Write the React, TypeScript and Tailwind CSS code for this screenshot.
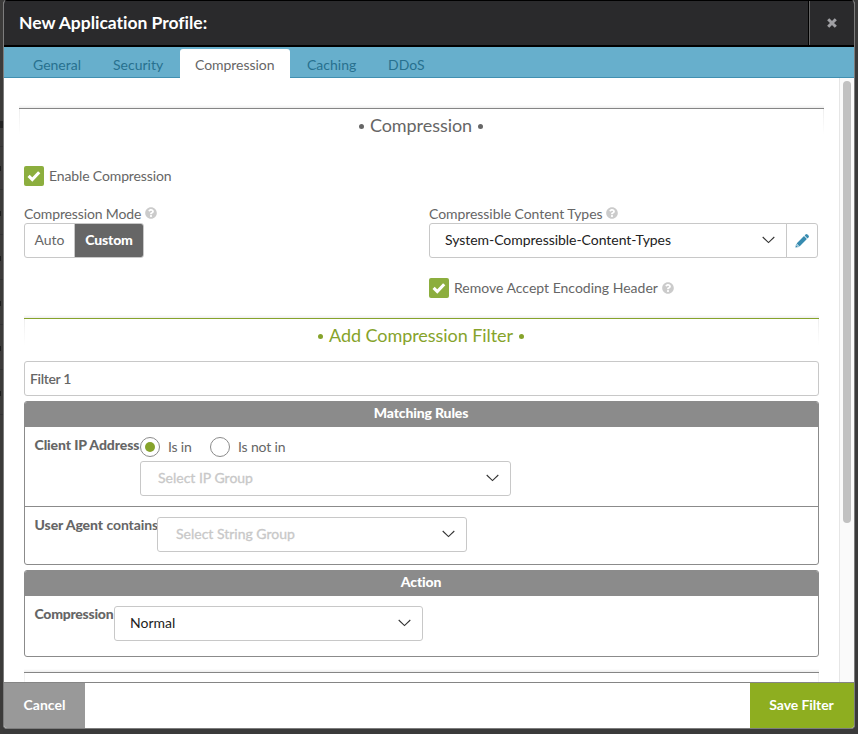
import type { ReactNode } from "react";
import { FaQuestionCircle } from "react-icons/fa";

function Chevron() {
  return (
    <svg width="13" height="8" viewBox="0 0 13 8" fill="none" stroke="#333" strokeWidth="1.1" className="-mt-px shrink-0">
      <path d="M0.7 1l5.8 5.6L12.3 1" />
    </svg>
  );
}

function Pencil() {
  return (
    <svg width="14" height="14" viewBox="0 0 14 14" fill="#378bb0">
      <path d="M9.6 1.5l1-1a1.3 1.3 0 0 1 1.8 0l1.1 1.1a1.3 1.3 0 0 1 0 1.8l-1 1z" />
      <path d="M9 2.1l2.9 2.9-7.4 7.4-2.9-2.9z" />
      <path d="M1.1 10L4 12.9.4 13.6z" />
      <path d="M1.5 11.4l1.2 1.2" stroke="#fff" strokeWidth="0.9" />
    </svg>
  );
}

function Check() {
  return (
    <span className="flex h-5 w-5 shrink-0 items-center justify-center rounded-[2px] bg-[#8cae3e]">
      <svg width="14" height="12" viewBox="0 0 14 12" fill="none" stroke="#fff" strokeWidth="3.1">
        <path d="M1.6 5.8l3.7 3.7L12.2 2.3" />
      </svg>
    </span>
  );
}

function Help() {
  return <FaQuestionCircle size={12} className="shrink-0 text-[#cbcbcb]" />;
}

function Select({ text, className, muted }: { text: string; className: string; muted?: boolean }) {
  return (
    <div className={`flex h-[35px] shrink-0 items-center justify-between rounded-[3px] border border-[#c8c8c8] bg-white pr-[11px] ${className}`}>
      <span className={muted ? "pb-[2px] text-[#c8c8c8] [-webkit-text-stroke:0.3px_#c8c8c8]" : "pb-[2px] text-[#222]"}>{text}</span>
      <Chevron />
    </div>
  );
}

function Dot() {
  return <span className="mt-[3px] h-[5px] w-[5px] rounded-full bg-current" />;
}

function SectionTop({ green, title, titleClass }: { green?: boolean; title?: string; titleClass?: string }) {
  return (
    <div className="h-[30px] shrink-0">
      <div className="h-[3px] bg-linear-to-b from-white to-[#ededed]" />
      <div className={`h-px ${green ? "bg-[#86a32b]" : "bg-[#858585]"}`} />
      <div className="flex h-[26px]">
        <div className="w-px bg-linear-to-b from-[#eeeeee] to-white" />
        <div className={`flex flex-1 items-center justify-center gap-[6px] pt-[6px] pr-px text-[18px] ${green ? "text-[#86a32b]" : "text-[#666]"}`}>
          {title && (
            <>
              <Dot />
              <span className={titleClass}>{title}</span>
              <Dot />
            </>
          )}
        </div>
        <div className="w-px bg-linear-to-b from-[#eeeeee] to-white" />
      </div>
    </div>
  );
}

function Panel({ title, className, children }: { title: string; className: string; children: ReactNode }) {
  return (
    <div className={`flex shrink-0 flex-col overflow-hidden rounded-[3px] border border-[#8b8b8b] ${className}`}>
      <div className="flex h-[25px] shrink-0 items-center justify-center bg-[#8b8b8b] pr-px pb-[3px] font-black text-white">
        <span className="tracking-[-0.15px]">{title}</span>
      </div>
      {children}
    </div>
  );
}

function Radio({ on }: { on?: boolean }) {
  return (
    <span className="flex h-5 w-5 shrink-0 items-center justify-center rounded-full border border-[#8b8b8b]">
      {on && <span className="h-2.5 w-2.5 rounded-full bg-[#86a32b]" />}
    </span>
  );
}

const stripRows = [0, 1, 2, 3, 4, 5, 6];

export default function App() {
  return (
    <div className="flex h-[734px] w-[858px] overflow-hidden bg-[#3a3a3a] font-['Lato',sans-serif] text-[14px] leading-[20px] whitespace-nowrap text-[#666]">
      <div className="w-[3px] shrink-0 bg-[#3c3b3a] pt-[121px]">
        {stripRows.map((r) => (
          <div key={r} className="h-[45px]">
            <div className={r === 0 ? "h-[7px] w-[3px] bg-[#222]" : "h-[5px] w-px bg-[#1c1c1c]"} />
            <div className="mt-[18px] h-px bg-[#333]" />
          </div>
        ))}
      </div>
      <div className="flex h-[729px] w-[852px] shrink-0 flex-col overflow-hidden rounded-[4px] border-r border-b border-l border-[#7d7d7d] bg-white">
        <header className="-mx-px flex h-[47px] shrink-0 border-x border-t border-b-2 border-black bg-[#2a2a2c]">
          <h1 className="flex flex-1 items-center pb-px pl-[15px] text-[17.5px] font-bold tracking-[-0.02px] text-white">New Application Profile:</h1>
          <div className="flex w-[45px] items-center justify-center border-l border-[#666] pr-px shadow-[-1px_0_0_#000]">
            <svg width="10" height="10" viewBox="0 0 10 10" stroke="#a0a0a4" strokeWidth="3">
              <path d="M1.2 1.2l7.6 7.6M8.8 1.2L1.2 8.8" />
            </svg>
          </div>
        </header>
        <nav className="flex h-[31px] shrink-0 border-b border-[#4190b1] bg-[#67afcc] pt-[2px] text-[#28718f]">
          <div className="w-[109px] pt-[6px] pl-[29px]">General</div>
          <div className="w-[67px] pt-[6px]">Security</div>
          <div className="h-[29px] w-[110px] rounded-t-[3px] bg-white pt-[6px] pl-[15px] text-[#666]"><span className="tracking-[-0.05px]">Compression</span></div>
          <div className="w-[98px] pt-[6px] pl-[17px]">Caching</div>
          <div className="pt-[6px]">DDoS</div>
        </nav>
        <div className="flex h-[604px] shrink-0">
          <main className="flex w-[835px] shrink-0 flex-col overflow-hidden pt-[27px]">
            <div className="mr-[15px] ml-[15px] h-[61px] shrink-0">
              <SectionTop title="Compression" titleClass="tracking-[-0.05px]" />
            </div>
            <div className="ml-5 flex h-5 shrink-0 items-center gap-[5px]"><Check /><span className="tracking-[-0.13px]">Enable Compression</span></div>
            <div className="mt-[18px] ml-5 flex h-[95px] shrink-0">
              <div className="w-[405px]">
                <div className="flex h-[19px] items-center gap-[4px]"><span className="tracking-[-0.14px]">Compression Mode</span><span className="-mt-[2px]"><Help /></span></div>
                <div className="flex h-[35px] w-[120px] overflow-hidden rounded-[3px] border border-[#c8c8c8]">
                  <div className="flex w-[50px] items-center justify-center border-r border-[#c8c8c8] pb-[2px]">Auto</div>
                  <div className="flex flex-1 items-center justify-center bg-[#666] pb-[2px] font-black tracking-[-0.15px] text-white">Custom</div>
                </div>
              </div>
              <div className="w-[389px]">
                <div className="flex h-[19px] items-center gap-[4px]"><span className="tracking-[-0.06px]">Compressible Content Types</span><span className="-mt-[2px]"><Help /></span></div>
                <div className="flex">
                  <Select text="System-Compressible-Content-Types" className="w-[358px] rounded-r-none pl-[15px] tracking-[-0.04px]" />
                  <div className="-ml-px flex h-[35px] w-[32px] items-center justify-center rounded-r-[3px] border border-[#c8c8c8]">
                    <Pencil />
                  </div>
                </div>
                <div className="mt-5 flex h-5 items-center gap-[5px]"><Check /><span>Remove Accept Encoding Header</span><span className="-ml-px"><Help /></span></div>
              </div>
            </div>
            <div className="mt-[16px] ml-5 flex w-[795px] shrink-0 flex-col">
              <SectionTop green title="Add Compression Filter" titleClass="tracking-[-0.06px]" />
              <div className="mt-[16px] flex h-[35px] items-center rounded-[3px] border border-[#c8c8c8] pl-[5px] font-semibold tracking-[-0.35px]">Filter 1</div>
              <Panel title="Matching Rules" className="mt-[5px] h-[164px]">
                <div className="flex h-[80px] shrink-0 border-b border-[#8b8b8b] pl-[9.5px]">
                  <div className="w-[105.5px] pt-[8px] font-black tracking-[-0.1px]">Client IP Address</div>
                  <div className="pt-[10px]">
                    <div className="flex h-[24px]">
                      <div className="flex h-5 w-[70px] items-center gap-2"><Radio on /><span className="tracking-[-0.2px]">Is in</span></div>
                      <div className="flex h-5 items-center gap-2"><Radio /><span className="tracking-[-0.15px]">Is not in</span></div>
                    </div>
                    <Select text="Select IP Group" muted className="w-[371px] pl-[17px]" />
                  </div>
                </div>
                <div className="flex pt-[10px] pl-[9.5px]">
                  <div className="-mt-[2px] w-[122.5px] tracking-[-0.1px]"><span className="font-black">User Agent</span> <span className="font-bold">contains</span></div>
                  <Select text="Select String Group" muted className="w-[310px] pl-[18px]" />
                </div>
              </Panel>
              <Panel title="Action" className="mt-[5px] h-[87px]">
                <div className="flex pt-[10px] pl-[9.5px]">
                  <div className="-mt-[2px] w-[79.5px] font-black tracking-[-0.25px]">Compression</div>
                  <Select text="Normal" className="w-[309px] pl-[15px]" />
                </div>
              </Panel>
              <div className="mt-[12px]"><SectionTop /></div>
            </div>
          </main>
          <div className="w-[15px] shrink-0 border-l border-[#e6e6e6] bg-[#fafafa] pt-[3px] pl-[3px]">
            <div className="h-[442px] w-2 rounded-full bg-[#c1c1c1]" />
          </div>
        </div>
        <footer className="flex h-[46px] shrink-0 justify-between border-t border-[#858585] font-bold text-white">
          <div className="flex w-[81px] items-center justify-center bg-[#999] pb-[2px]">Cancel</div>
          <div className="flex w-[104px] items-center justify-center bg-[#8eae20] pr-px pb-[2px] tracking-[-0.1px]">Save Filter</div>
        </footer>
      </div>
    </div>
  );
}
